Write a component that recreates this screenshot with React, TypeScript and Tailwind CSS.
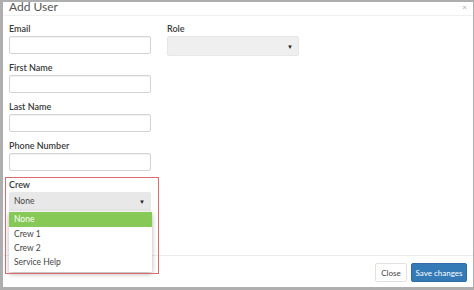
import React from "react";

const Field = ({ label, children }: { label: string; children: React.ReactNode }) => (
  <div className="flex flex-col">
    <div className="h-[12px] leading-[13px] text-[9px] font-semibold text-[#3a3a3a]">{label}</div>
    <div className="mt-[2px]">{children}</div>
  </div>
);

const Input = () => (
  <div className="h-[18px] w-[142px] rounded-[2px] border border-[#d4d4d4] bg-white shadow-[inset_0_1px_1px_rgba(0,0,0,0.06)]" />
);

export default function App() {
  return (
    <div
      className="relative w-[474px] h-[290px] overflow-hidden bg-[#aeaeae] pt-[2px] pl-[3px] pr-[1px] pb-[3px]"
      style={{ fontFamily: "Lato, 'Open Sans', sans-serif" }}
    >
      <div className="relative flex h-full flex-col bg-white">
        {/* header */}
        <div className="flex h-[14px] items-center justify-between border-b border-[#f0f0f0] pl-[6px] pr-[6px]">
          <div className="text-[12px] leading-[12px] text-[#555] -mt-[3px]">Add User</div>
          <div className="text-[8px] leading-[8px] text-[#aaa] -mt-[4px]">×</div>
        </div>
        {/* body */}
        <div className="flex flex-1 gap-[16px] pl-[6px] pt-[6px]">
          <div className="flex w-[142px] flex-col gap-[7px]">
            <Field label="Email"><Input /></Field>
            <Field label="First Name"><Input /></Field>
            <Field label="Last Name"><Input /></Field>
            <Field label="Phone Number"><Input /></Field>
            <Field label="Crew">
              <div className="flex h-[19px] w-[142px] items-center justify-between rounded-t-[2px] bg-[#e8e8e8] pl-[5px] pr-[6px]">
                <span className="text-[8.5px] text-[#444]">None</span>
                <span className="text-[6px] text-[#222]">▼</span>
              </div>
            </Field>
          </div>
          <div className="flex w-[132px] flex-col">
            <Field label="Role">
              <div className="flex h-[20px] w-[132px] items-center justify-end rounded-[2px] border border-[#e6e6e6] bg-[#efefef] pr-[5px]">
                <span className="text-[6px] text-[#222]">▼</span>
              </div>
            </Field>
          </div>
        </div>
        {/* footer */}
        <div className="flex h-[32px] items-start justify-end gap-[4px] border-t border-[#ececec] pr-[6px] pt-[7px]">
          <button className="h-[19px] w-[32px] rounded-[2px] border border-[#e2e2e2] bg-white text-[8px] text-[#444]">
            Close
          </button>
          <button className="h-[19px] w-[56px] rounded-[2px] border border-[#2e6da4] bg-[#337ab7] text-[8px] text-white">
            Save changes
          </button>
        </div>

        {/* dropdown menu overlay */}
        <div className="absolute left-[6px] top-[210px] w-[143px] bg-white pb-[3px] shadow-[0_2px_5px_rgba(0,0,0,0.3)]">
          <div className="flex h-[15px] items-center bg-[#86c956] pl-[5px] text-[8.5px] text-white">None</div>
          <div className="flex h-[14px] items-center pl-[5px] text-[8.5px] text-[#444]">Crew 1</div>
          <div className="flex h-[14px] items-center pl-[5px] text-[8.5px] text-[#444]">Crew 2</div>
          <div className="flex h-[14px] items-center pl-[5px] text-[8.5px] text-[#444]">Service Help</div>
        </div>

        {/* red annotation box */}
        <div className="pointer-events-none absolute left-[2px] top-[175px] h-[97px] w-[154px] border-[1.5px] border-[#dd6a6e]" />
      </div>
    </div>
  );
}
